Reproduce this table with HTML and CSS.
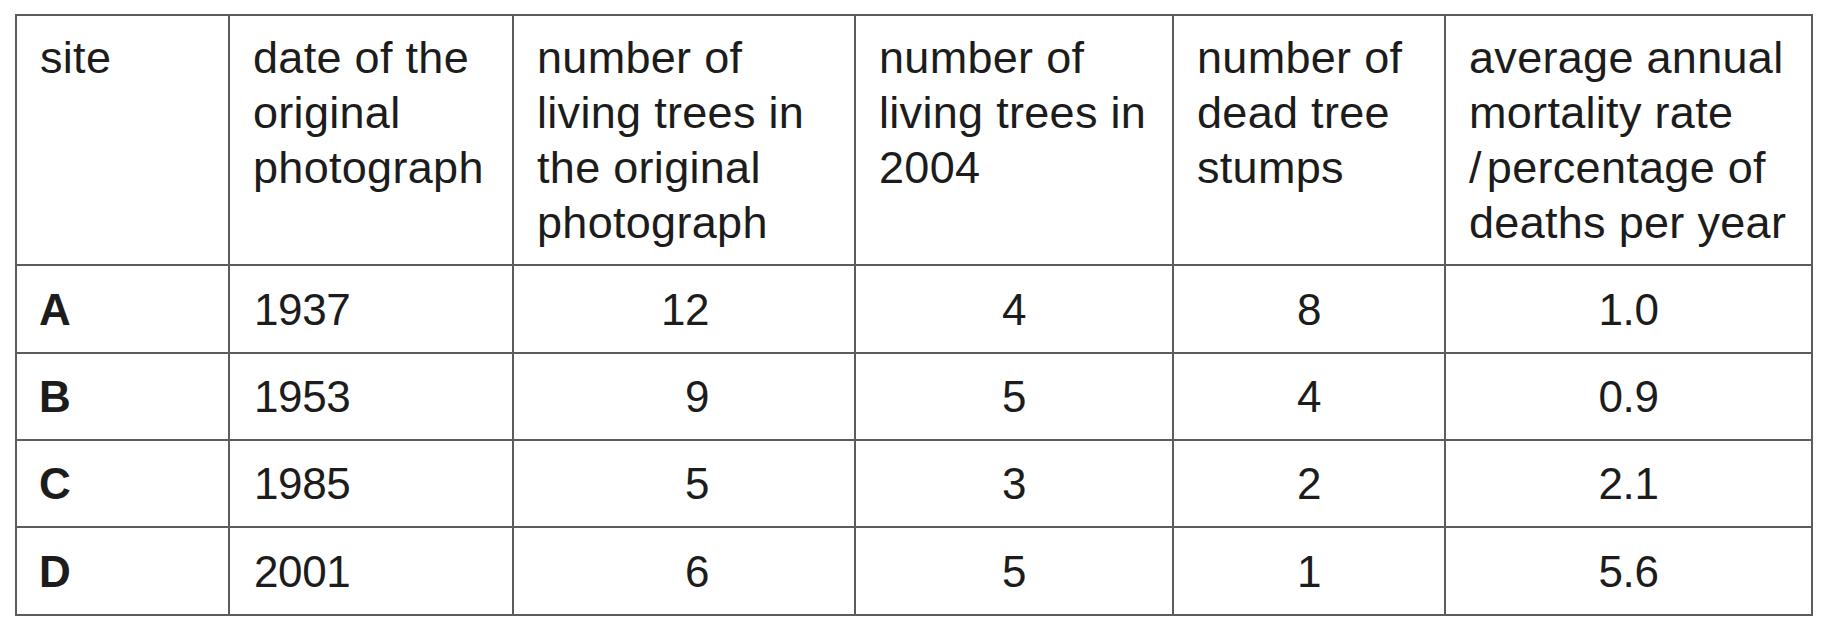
FILE: index.html
```html
<!DOCTYPE html>
<html lang="en">
<head>
<meta charset="utf-8">
<title>Tree mortality</title>
<link rel="stylesheet" href="styles.css">
</head>
<body>
<div class="page">
  <div class="grid" role="table">
    <div class="cell head" role="columnheader">site</div>
    <div class="cell head" role="columnheader">date of the<br>original<br>photograph</div>
    <div class="cell head" role="columnheader">number of<br>living trees in<br>the original<br>photograph</div>
    <div class="cell head" role="columnheader">number of<br>living trees in<br>2004</div>
    <div class="cell head" role="columnheader">number of<br>dead tree<br>stumps</div>
    <div class="cell head" role="columnheader">average annual<br>mortality rate<br><span class="slash">/</span>percentage of<br>deaths per year</div>

    <div class="cell site">A</div>
    <div class="cell">1937</div>
    <div class="cell center"><span class="fig2">12</span></div>
    <div class="cell center">4</div>
    <div class="cell center">8</div>
    <div class="cell center">1.0</div>

    <div class="cell site">B</div>
    <div class="cell">1953</div>
    <div class="cell center"><span class="fig2">9</span></div>
    <div class="cell center">5</div>
    <div class="cell center">4</div>
    <div class="cell center">0.9</div>

    <div class="cell site">C</div>
    <div class="cell">1985</div>
    <div class="cell center"><span class="fig2">5</span></div>
    <div class="cell center">3</div>
    <div class="cell center">2</div>
    <div class="cell center">2.1</div>

    <div class="cell site">D</div>
    <div class="cell">2001</div>
    <div class="cell center"><span class="fig2">6</span></div>
    <div class="cell center">5</div>
    <div class="cell center">1</div>
    <div class="cell center">5.6</div>
  </div>
</div>
</body>
</html>
```

FILE: styles.css
```css
html, body {
  margin: 0;
  padding: 0;
  background: #ffffff;
}

.page {
  padding: 14px 0 0 15px;
  font-family: "Liberation Sans", Arial, Helvetica, sans-serif;
  color: #1c1c1c;
}

.grid {
  display: grid;
  grid-template-columns: 213px 284px 342px 318px 272px 367px;
  grid-template-rows: 250px 88px 87px 87px 88px;
  width: max-content;
  border-top: 2px solid #5c5c5c;
  border-left: 2px solid #5c5c5c;
}

.cell {
  box-sizing: border-box;
  border-right: 2px solid #5c5c5c;
  border-bottom: 2px solid #5c5c5c;
  padding: 0 0 0 24px;
  font-size: 44px;
  line-height: 55px;
  display: flex;
  align-items: center;
  letter-spacing: -0.4px;
}

.head {
  display: block;
  padding-top: 14px;
  padding-left: 23px;
  font-size: 45px;
  letter-spacing: 0.3px;
}

.site {
  font-weight: bold;
  padding-left: 22px;
}

.center {
  justify-content: center;
  padding-left: 0;
}

.fig2 {
  display: inline-block;
  width: 1.1em;
  text-align: right;
  margin-left: 2px;
}

.slash {
  margin-right: 5px;
}
```
